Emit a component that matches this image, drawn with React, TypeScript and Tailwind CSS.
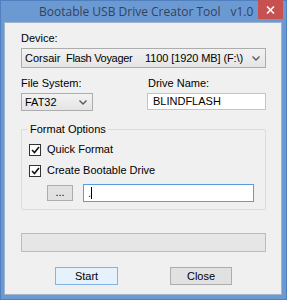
import React from 'react';

const Chevron: React.FC = () => (
  <svg width="8" height="5" viewBox="0 0 8 5" className="shrink-0">
    <path d="M0.5 0.5 L4 4 L7.5 0.5" fill="none" stroke="#555" strokeWidth="1.3" />
  </svg>
);

const Checkbox: React.FC<{ label: string }> = ({ label }) => (
  <div className="flex items-center h-[13px]">
    <div className="w-[12px] h-[12px] border border-[#333] bg-white flex items-center justify-center">
      <svg width="9" height="8" viewBox="0 0 9 8">
        <path d="M1 4 L3.5 6.5 L8 1" fill="none" stroke="#111" strokeWidth="1.6" />
      </svg>
    </div>
    <span className="ml-[6px]">{label}</span>
  </div>
);

export default function App() {
  return (
    <div
      className="w-[287px] h-[300px] bg-[#6b9ad3] border border-[#4f7fbe] flex flex-col text-[11px] leading-[13px] text-black"
      style={{ fontFamily: '"Liberation Sans", Arial, sans-serif' }}
    >
      {/* Title bar */}
      <div className="h-[21px] flex items-start shrink-0">
        <div
          className="pl-[38px] pt-[3px] text-[12px] leading-[15px] text-[#33425c] whitespace-pre"
          style={{ fontFamily: '"Open Sans", "Noto Sans", sans-serif' }}
        >
          <span>Bootable USB Drive Creator Tool</span>
          <span className="ml-[10px]">v1.0</span>
        </div>
        <div className="ml-auto mr-[3px] -mt-px w-[25px] h-[19px] bg-[#c75050] flex items-center justify-center">
          <svg width="9" height="8" viewBox="0 0 9 8">
            <path d="M1 0.5 L8 7.5 M8 0.5 L1 7.5" stroke="#fff" strokeWidth="1.6" />
          </svg>
        </div>
      </div>

      {/* Client area */}
      <div className="flex-1 ml-[3px] mr-[4px] mb-[4px] bg-[#f0f0f0] border border-[#9fb3cc] pl-[16px] pr-[15px] pt-[9px] flex flex-col">
        <div>Device:</div>
        <div className="mt-[3px] h-[20px] border border-[#acacac] bg-gradient-to-b from-[#f2f2f2] to-[#e5e5e5] flex items-center pl-[3px] pr-[5px] whitespace-nowrap">
          <span className="w-[41px]">Corsair</span>
          <span className="w-[79px] tracking-[-0.3px]">Flash Voyager</span>
          <span className="tracking-[-0.1px]">1100 [1920 MB] (F:\)</span>
          <span className="ml-auto"><Chevron /></span>
        </div>

        <div className="mt-[9px] flex justify-between">
          <div className="w-[72px] flex flex-col">
            <div>File System:</div>
            <div className="mt-[3px] h-[18px] border border-[#acacac] bg-gradient-to-b from-[#f2f2f2] to-[#e5e5e5] flex items-center pl-[3px] pr-[5px]">
              <span>FAT32</span>
              <span className="ml-auto"><Chevron /></span>
            </div>
          </div>
          <div className="w-[119px] flex flex-col">
            <div className="pl-px">Drive Name:</div>
            <div className="mt-[3px] h-[17px] border border-[#c5c5c5] bg-white flex items-center pl-[5px]">
              BLINDFLASH
            </div>
          </div>
        </div>

        {/* Format Options group */}
        <div className="relative mt-[18px] h-[81px] border border-[#dcdcdc] rounded-[2px] pl-[7px] pr-[11px] pt-[13px] flex flex-col">
          <span className="absolute left-[6px] top-[-7px] px-[2px] bg-[#f0f0f0]">Format Options</span>
          <Checkbox label="Quick Format" />
          <div className="mt-[8px]">
            <Checkbox label="Create Bootable Drive" />
          </div>
          <div className="mt-[7px] flex items-center">
            <div className="ml-[18px] w-[26px] h-[16px] border border-[#adadad] bg-[#e1e1e1] flex items-center justify-center leading-[10px] pb-[3px]">
              ...
            </div>
            <div className="ml-[10px] flex-1 h-[18px] border border-[#569de5] bg-white flex items-center pl-[4px]">
              <span>.</span>
              <span className="w-px h-[12px] bg-black" />
            </div>
          </div>
        </div>

        <div className="mt-[23px] h-[19px] border border-[#bcbcbc] bg-[#e6e6e6]" />

        <div className="mt-[15px] flex pl-[34px]">
          <div className="w-[63px] h-[18px] border border-[#7eb4ea] bg-[#e5f1fb] flex items-center justify-center">
            Start
          </div>
          <div className="ml-[52px] w-[62px] h-[18px] border border-[#adadad] bg-[#e1e1e1] flex items-center justify-center">
            Close
          </div>
        </div>
      </div>
    </div>
  );
}
